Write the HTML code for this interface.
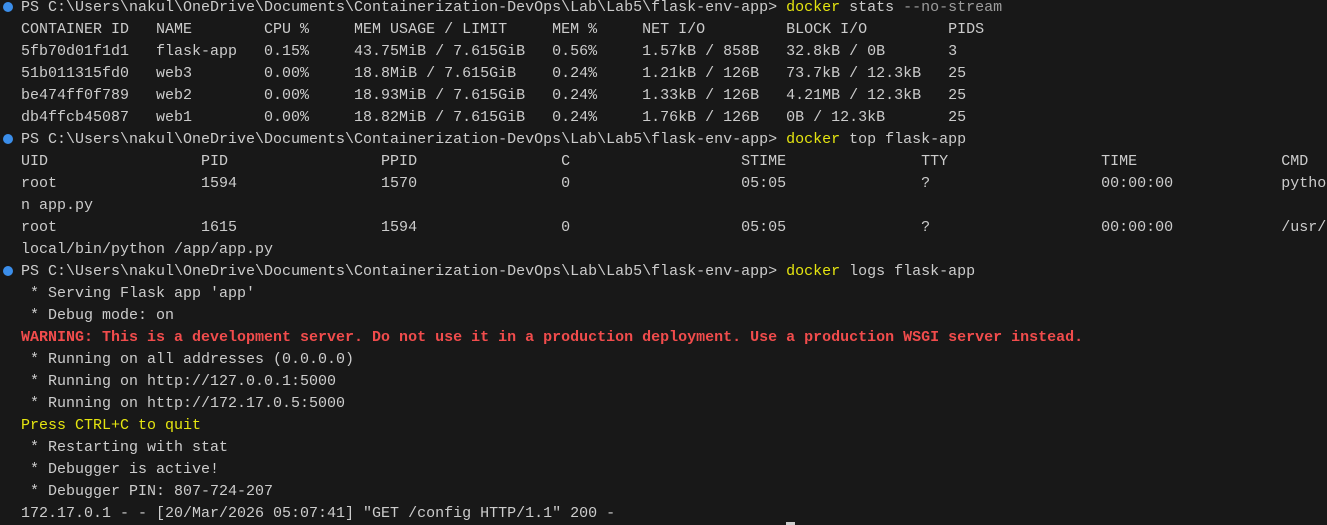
<!DOCTYPE html>
<html><head><meta charset="utf-8"><style>
html,body{margin:0;padding:0;background:#181818;width:1327px;height:525px;overflow:hidden}
pre{margin:0;position:absolute;left:21px;top:-3px;font-family:"Liberation Mono",monospace;font-size:15px;line-height:22px;color:#cccccc;white-space:pre}
.y{color:#e5e510}.g{color:#9d9d9d}.r{color:#f14c4c;font-weight:bold}
.dot{position:absolute;left:3px;width:10px;height:10px;border-radius:50%;background:#3b8eea}
.cur{position:absolute;left:786px;top:522px;width:9px;height:3px;background:#cccccc}
</style></head><body>
<div class="dot" style="top:2px"></div>
<div class="dot" style="top:134px"></div>
<div class="dot" style="top:266px"></div>
<pre>PS C:\Users\nakul\OneDrive\Documents\Containerization-DevOps\Lab\Lab5\flask-env-app&gt; <span class="y">docker</span> stats <span class="g">--no-stream</span>
CONTAINER ID   NAME        CPU %     MEM USAGE / LIMIT     MEM %     NET I/O         BLOCK I/O         PIDS
5fb70d01f1d1   flask-app   0.15%     43.75MiB / 7.615GiB   0.56%     1.57kB / 858B   32.8kB / 0B       3
51b011315fd0   web3        0.00%     18.8MiB / 7.615GiB    0.24%     1.21kB / 126B   73.7kB / 12.3kB   25
be474ff0f789   web2        0.00%     18.93MiB / 7.615GiB   0.24%     1.33kB / 126B   4.21MB / 12.3kB   25
db4ffcb45087   web1        0.00%     18.82MiB / 7.615GiB   0.24%     1.76kB / 126B   0B / 12.3kB       25
PS C:\Users\nakul\OneDrive\Documents\Containerization-DevOps\Lab\Lab5\flask-env-app&gt; <span class="y">docker</span> top flask-app
UID                 PID                 PPID                C                   STIME               TTY                 TIME                CMD
root                1594                1570                0                   05:05               ?                   00:00:00            pytho
n app.py
root                1615                1594                0                   05:05               ?                   00:00:00            /usr/
local/bin/python /app/app.py
PS C:\Users\nakul\OneDrive\Documents\Containerization-DevOps\Lab\Lab5\flask-env-app&gt; <span class="y">docker</span> logs flask-app
 * Serving Flask app 'app'
 * Debug mode: on
<span class="r">WARNING: This is a development server. Do not use it in a production deployment. Use a production WSGI server instead.</span>
 * Running on all addresses (0.0.0.0)
 * Running on http://127.0.0.1:5000
 * Running on http://172.17.0.5:5000
<span class="y">Press CTRL+C to quit</span>
 * Restarting with stat
 * Debugger is active!
 * Debugger PIN: 807-724-207
172.17.0.1 - - [20/Mar/2026 05:07:41] "GET /config HTTP/1.1" 200 -</pre>
<div class="cur"></div>
</body></html>
